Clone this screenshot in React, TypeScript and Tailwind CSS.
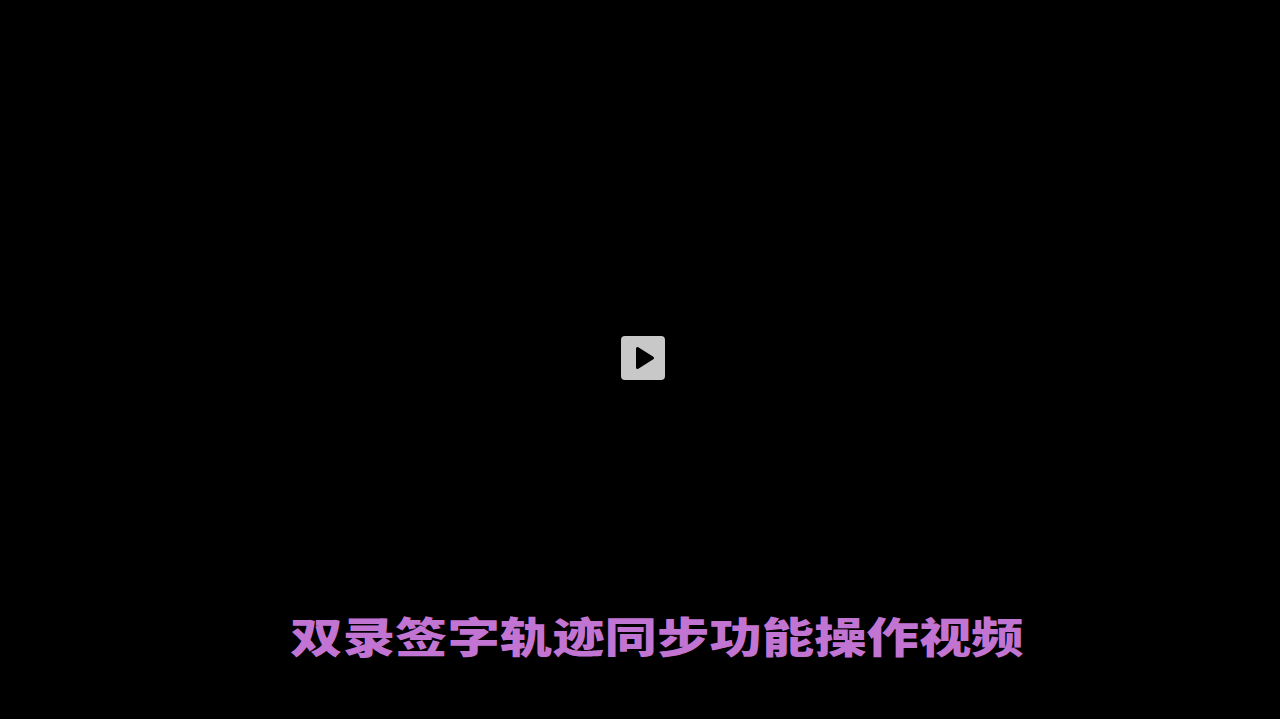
export default function App() {
  return (
    <div className="flex h-[719px] w-full flex-col items-center overflow-hidden bg-black pt-[336px]">
      <button className="ml-[6px] flex h-[44px] w-[44px] items-center justify-center rounded-[4px] bg-[#c8c8c8]">
        <svg width="44" height="44" viewBox="0 0 44 44">
          <path d="M16.5 12.5 L16.5 31.5 L31.5 22 Z" fill="#000" stroke="#000" strokeWidth="3" strokeLinejoin="round" />
        </svg>
      </button>
      <div className="mt-[230px] ml-[34px] origin-top scale-y-[0.8] whitespace-nowrap text-[52.4px] leading-[62px] font-black text-[#c274d2] [font-family:'Noto_Sans_CJK_SC',sans-serif]">
        双录签字轨迹同步功能操作视频
      </div>
    </div>
  );
}
